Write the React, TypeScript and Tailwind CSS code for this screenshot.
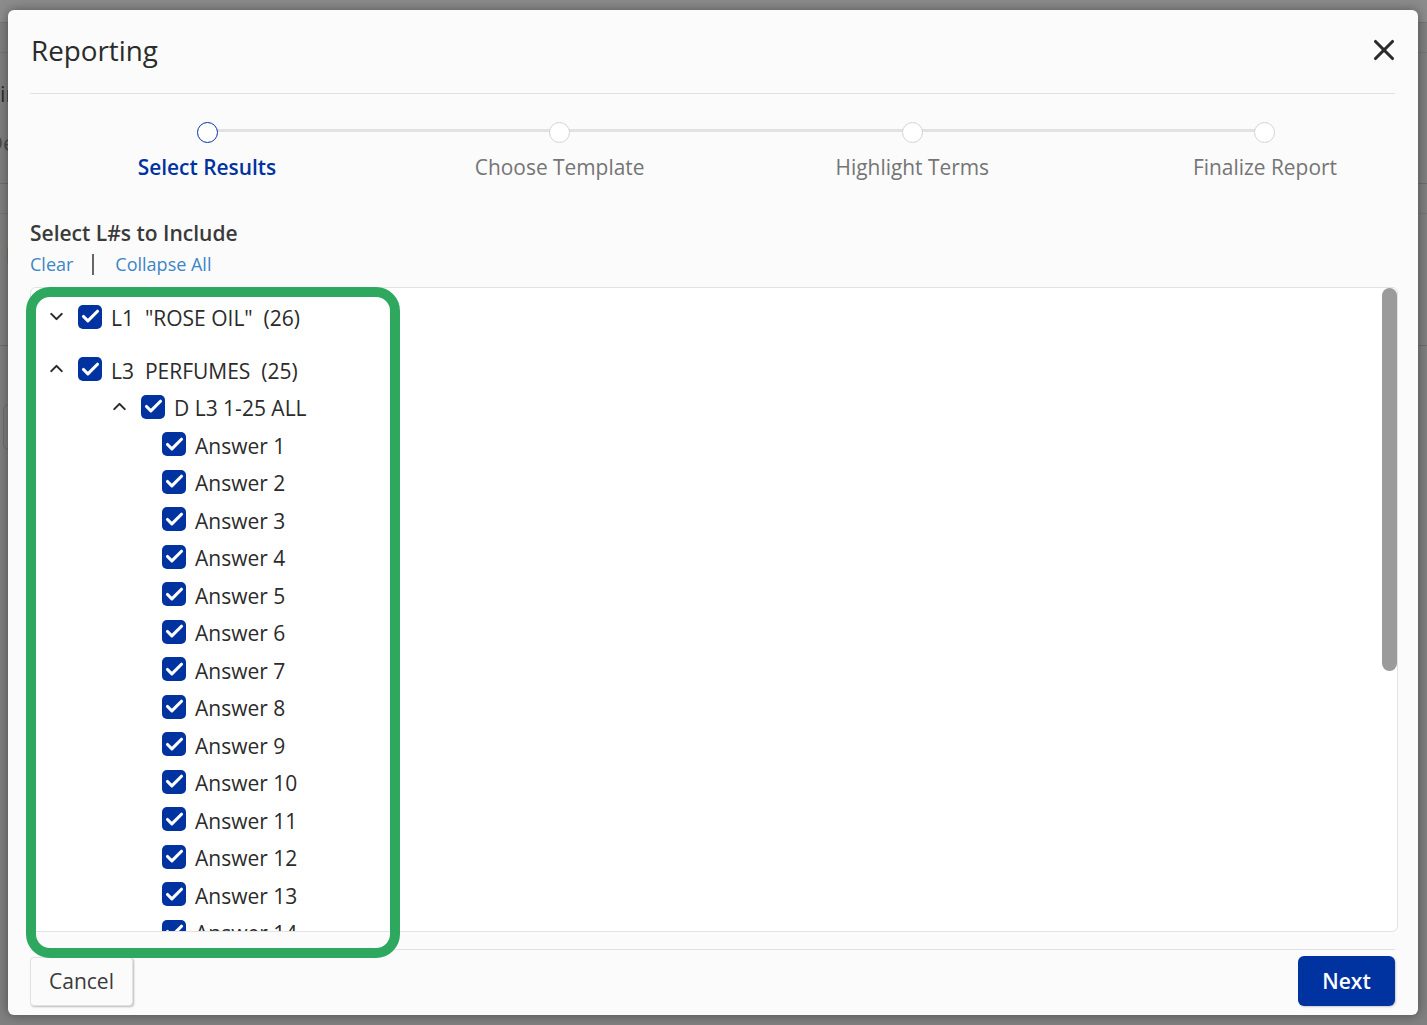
import { Check, ChevronDown, ChevronUp, X } from 'lucide-react'

const steps = ['Select Results', 'Choose Template', 'Highlight Terms', 'Finalize Report']
const answers = Array.from({ length: 14 }, (_, i) => `Answer ${i + 1}`)

function Box() {
  return (
    <span className="mb-[4px] flex size-6 shrink-0 items-center justify-center rounded-[5px] bg-[#0033a0]">
      <Check className="size-[21px] text-white" strokeWidth={3.6} />
    </span>
  )
}

function Row({ indent, open, label }: { indent: string; open?: 'up' | 'down'; label: string }) {
  return (
    <div className={`flex h-[37.5px] items-center ${indent}`}>
      {open === 'up' && <ChevronUp className="mb-[5px] mr-[11px] size-[21px] shrink-0 text-[#2b2b2b]" strokeWidth={2.4} />}
      {open === 'down' && <ChevronDown className="mb-[5px] mr-[11px] size-[21px] shrink-0 text-[#2b2b2b]" strokeWidth={2.4} />}
      <Box />
      <span className="ml-[9px] whitespace-pre text-[21px] leading-none text-[#2b2b2b]">{label}</span>
    </div>
  )
}

export default function App() {
  return (
    <div className="relative h-[1025px] w-[1427px] overflow-hidden bg-[#808080] font-['Open_Sans',sans-serif]">
      {/* Page behind the overlay */}
      <div className="h-[23px] border-b border-[#767676] bg-[#8c8c8c]" />
      <div className="h-[30px] border-b border-[#767676]" />
      <div className="h-[131px] overflow-hidden border-b border-[#6e6e6e] pt-[26px] text-[22px] leading-[28px] text-[#2e2e2e]">
        <div>in</div>
        <div className="-ml-[13px] mt-[21px] text-[#4a4a4a]">De</div>
      </div>
      <div className="h-[30px] border-b border-[#767676]" />
      <div className="h-[132px] overflow-hidden border-b border-[#6e6e6e] pl-[6px] pt-[26px] text-[22px] leading-[28px] text-[#2e2e2e]">
        l
      </div>
      <div className="ml-[3px] mt-[58px] h-[46px] w-[20px] rounded-md border border-[#6e6e6e]" />

      {/* Modal */}
      <div className="absolute left-2 top-2.5 flex h-[1005px] w-[1410px] flex-col rounded-md bg-[#fbfbfb] pl-[22px] pr-[23px] shadow-[0_0_12px_rgba(0,0,0,0.4)]">
        <div className="flex h-[84px] shrink-0 items-center justify-between border-b border-[#e2e2e2]">
          <h2 className="mb-[2px] pl-px text-[27.8px] font-normal text-[#2b2b2b]">Reporting</h2>
          <X className="-mr-[6px] mb-[4px] size-[34px] text-[#2b2b2b]" strokeWidth={2.2} />
        </div>

        {/* Stepper */}
        <div className="relative mt-[28px] flex shrink-0 justify-between pl-[87px] pr-[40px]">
          <div className="absolute left-[177px] right-[130px] top-[7px] h-[3px] bg-[#e2e2e2]" />
          {steps.map((step, i) => (
            <div key={step} className="relative flex w-[180px] flex-col items-center">
              <span className={`size-[21px] rounded-full border bg-white ${i === 0 ? 'border-[#0033a0]' : 'border-[#d4d4d4]'}`} />
              <span className={`mt-[10px] text-[20.9px] leading-[28px] ${i === 0 ? 'font-semibold text-[#0033a0]' : 'text-[#757575]'}`}>
                {step}
              </span>
            </div>
          ))}
        </div>

        <div className="mt-[38px] shrink-0 text-[21px] font-semibold leading-[28px] text-[#3a3a3a]">Select L#s to Include</div>
        <div className="mt-[4px] flex h-[26px] shrink-0 items-center text-[18px] text-[#3d85c6]">
          <span>Clear</span>
          <span className="ml-[19px] mr-[21px] h-[21px] w-[2px] bg-[#666]" />
          <span>Collapse All</span>
        </div>

        {/* Tree */}
        <div className="relative mr-[-3px] mt-[10px] h-[645px] shrink-0 overflow-hidden rounded-md border border-[#e2e2e2] bg-white">
          <div className="pt-[12px]">
            <Row indent="pl-[15px]" open="down" label={'L1  "ROSE OIL"  (26)'} />
            <div className="h-[15px]" />
            <Row indent="pl-[15px]" open="up" label="L3  PERFUMES  (25)" />
            <Row indent="pl-[78px]" open="up" label="D L3 1-25 ALL" />
            {answers.map((a) => (
              <Row key={a} indent="pl-[131px]" label={a} />
            ))}
          </div>
          <div className="absolute right-0 top-0 h-[383px] w-[15px] rounded-full bg-[#9b9b9b]" />
        </div>

        {/* Footer */}
        <div className="mt-[17px] flex shrink-0 items-start justify-between border-t border-[#e2e2e2] pt-[6px]">
          <button className="mt-[1px] h-[49px] w-[103px] rounded-[4px] border border-[#e2e2e2] bg-[#fbfbfb] text-[21px] text-[#3a3a3a] shadow-[1px_1px_2px_rgba(0,0,0,0.25)]">
            Cancel
          </button>
          <button className="h-[50px] w-[97px] rounded-[6px] bg-[#0033a0] pt-px text-[21px] font-semibold text-white shadow-[1px_1px_2px_rgba(0,0,0,0.2)]">
            Next
          </button>
        </div>
      </div>

      {/* Green annotation drawn over the screenshot */}
      <div className="absolute left-[26px] top-[287px] h-[671px] w-[374px] rounded-[24px] border-[10px] border-[#2ea85f]" />
    </div>
  )
}
